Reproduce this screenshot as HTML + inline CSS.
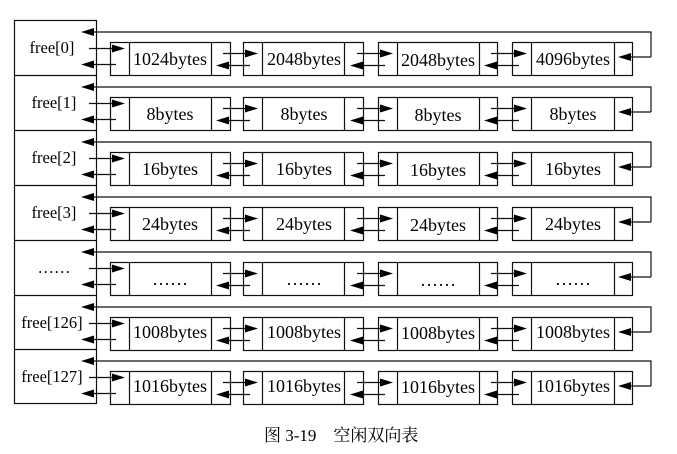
<!DOCTYPE html>
<html><head><meta charset="utf-8"><style>
html,body{margin:0;padding:0;background:#fff;width:677px;height:454px;overflow:hidden}
svg{display:block}
text{font-family:"Liberation Serif","Noto Serif CJK SC",serif;font-size:18px;fill:#000}
.l{font-size:16.5px}
</style></head><body>
<svg width="677" height="454" viewBox="0 0 677 454" xmlns="http://www.w3.org/2000/svg">
<defs>
<g id="row" stroke="#111" stroke-width="1.2" fill="none">
  <polyline points="651,37 651,12 92,12"/>
  <polygon points="81,12 94,8 94,16" fill="#000" stroke="none"/>
  <line x1="651" y1="37" x2="630" y2="37"/>
  <polygon points="618,37 631,33 631,41" fill="#000" stroke="none"/>
  <rect x="110.5" y="22.5" width="120" height="33"/><line x1="129.5" y1="22.5" x2="129.5" y2="55.5"/><line x1="211.5" y1="22.5" x2="211.5" y2="55.5"/>
  <rect x="243.5" y="22.5" width="120" height="33"/><line x1="262.5" y1="22.5" x2="262.5" y2="55.5"/><line x1="344.5" y1="22.5" x2="344.5" y2="55.5"/>
  <rect x="378.5" y="22.5" width="119" height="33"/><line x1="397.5" y1="22.5" x2="397.5" y2="55.5"/><line x1="479.5" y1="22.5" x2="479.5" y2="55.5"/>
  <rect x="512.5" y="22.5" width="120" height="33"/><line x1="531.5" y1="22.5" x2="531.5" y2="55.5"/><line x1="614.5" y1="22.5" x2="614.5" y2="55.5"/>
  <line x1="89" y1="28.5" x2="113" y2="28.5"/><polygon points="125,28.5 112,24.5 112,32.5" fill="#000" stroke="none"/>
  <line x1="116" y1="44.5" x2="93" y2="44.5"/><polygon points="81,44.5 94,40.5 94,48.5" fill="#000" stroke="none"/>
  <line x1="223" y1="33.5" x2="246" y2="33.5"/><polygon points="258,33.5 245,29.5 245,37.5" fill="#000" stroke="none"/>
  <line x1="250" y1="45.5" x2="228" y2="45.5"/><polygon points="216,45.5 229,41.5 229,49.5" fill="#000" stroke="none"/>
  <line x1="357" y1="33.5" x2="381" y2="33.5"/><polygon points="393,33.5 380,29.5 380,37.5" fill="#000" stroke="none"/>
  <line x1="385" y1="45.5" x2="362" y2="45.5"/><polygon points="350,45.5 363,41.5 363,49.5" fill="#000" stroke="none"/>
  <line x1="491" y1="33.5" x2="515" y2="33.5"/><polygon points="527,33.5 514,29.5 514,37.5" fill="#000" stroke="none"/>
  <line x1="519" y1="45.5" x2="496" y2="45.5"/><polygon points="484,45.5 497,41.5 497,49.5" fill="#000" stroke="none"/>
</g>
</defs>
<g stroke="#111" stroke-width="1.2" fill="none">
<rect x="14.5" y="20.5" width="82" height="383"/>
<line x1="14.5" y1="75.5" x2="96.5" y2="75.5"/>
<line x1="14.5" y1="130.5" x2="96.5" y2="130.5"/>
<line x1="14.5" y1="185.5" x2="96.5" y2="185.5"/>
<line x1="14.5" y1="240.5" x2="96.5" y2="240.5"/>
<line x1="14.5" y1="295.5" x2="96.5" y2="295.5"/>
<line x1="14.5" y1="349.5" x2="96.5" y2="349.5"/>
</g>
<use href="#row" y="20"/>
<use href="#row" y="75"/>
<use href="#row" y="130"/>
<use href="#row" y="185"/>
<use href="#row" y="240"/>
<use href="#row" y="295"/>
<use href="#row" y="349"/>
<g text-anchor="middle">
<text class="l" x="52" y="53">free[0]</text>
<text x="170" y="65">1024bytes</text><text x="304" y="65">2048bytes</text><text x="438" y="66">2048bytes</text><text x="573" y="65">4096bytes</text>
<text class="l" x="54" y="108">free[1]</text>
<text x="170" y="120">8bytes</text><text x="304" y="120">8bytes</text><text x="438" y="121">8bytes</text><text x="573" y="120">8bytes</text>
<text class="l" x="54" y="163">free[2]</text>
<text x="170" y="175">16bytes</text><text x="304" y="175">16bytes</text><text x="438" y="176">16bytes</text><text x="573" y="175">16bytes</text>
<text class="l" x="54" y="218">free[3]</text>
<text x="170" y="230">24bytes</text><text x="304" y="230">24bytes</text><text x="438" y="231">24bytes</text><text x="573" y="230">24bytes</text>
<text class="l" x="54" y="273">……</text>
<text x="170" y="285">……</text><text x="304" y="285">……</text><text x="438" y="286">……</text><text x="573" y="285">……</text>
<text class="l" x="52" y="328">free[126]</text>
<text x="170" y="338">1008bytes</text><text x="304" y="338">1008bytes</text><text x="438" y="339">1008bytes</text><text x="573" y="338">1008bytes</text>
<text class="l" x="52" y="382">free[127]</text>
<text x="170" y="392">1016bytes</text><text x="304" y="392">1016bytes</text><text x="438" y="393">1016bytes</text><text x="573" y="392">1016bytes</text>
</g>
<text x="264" y="441" style="font-size:17px">图 3-19　空闲双向表</text>
</svg>
</body></html>
